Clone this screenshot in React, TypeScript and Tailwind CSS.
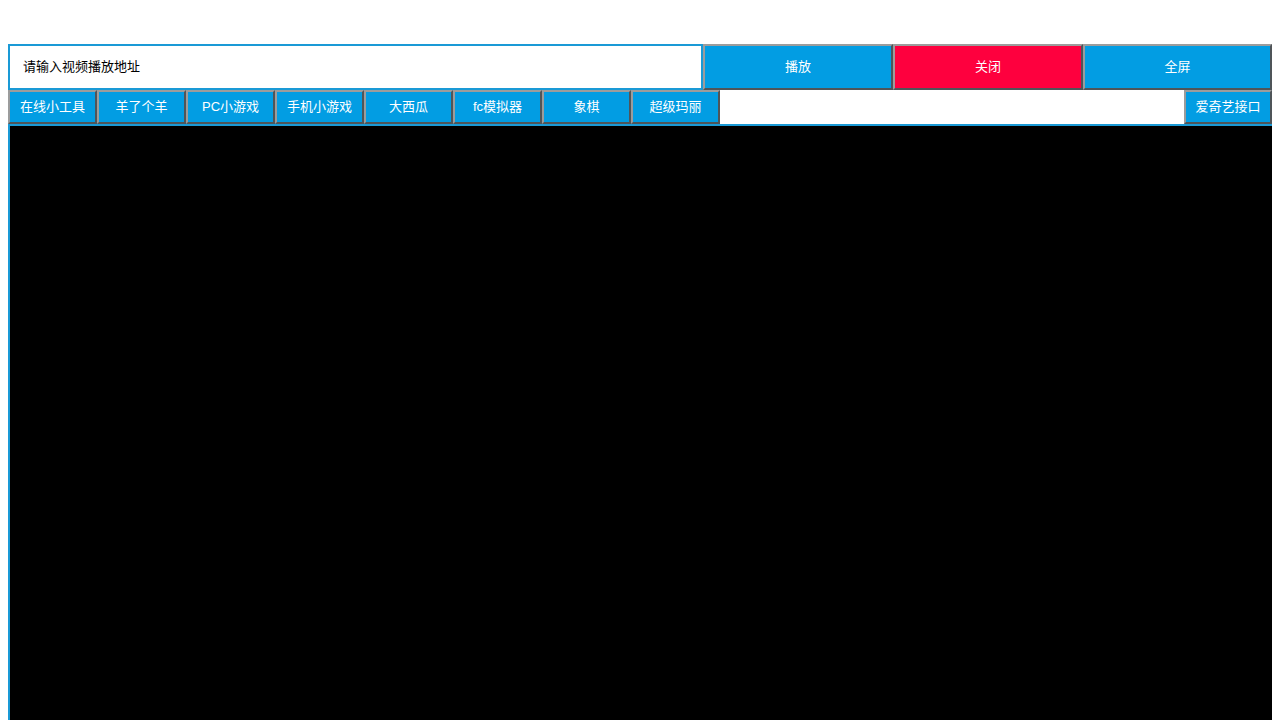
import React, { useState } from 'react'

const font = { fontFamily: '"Liberation Sans", "Noto Sans CJK SC", sans-serif' }

const games = ['在线小工具', '羊了个羊', 'PC小游戏', '手机小游戏', '大西瓜', 'fc模拟器', '象棋', '超级玛丽']

// raised look of a plain html button
const raised =
  'border-2 border-t-[#9c9c9c] border-l-[#9c9c9c] border-b-[#4f5559] border-r-[#4f5559] text-white text-[13px] leading-none pb-[2px]'

export default function App() {
  const [url, setUrl] = useState('')

  return (
    <div className="bg-white min-h-[720px] px-2 pt-[44px]" style={font}>
      <div className="w-[1264px]">
        {/* address + player controls */}
        <div className="flex h-[46px]">
          <input
            value={url}
            onChange={(e) => setUrl(e.target.value)}
            placeholder="请输入视频播放地址"
            className="w-[695px] h-full border-2 border-[#1a9ad6] px-[13px] pb-[2px] text-[13px] text-black placeholder:text-black outline-none"
          />
          <button className={`w-[190px] h-full bg-[#029de3] ${raised}`}>播放</button>
          <button className={`w-[190px] h-full bg-[#fe003e] ${raised}`}>关闭</button>
          <button className={`w-[189px] h-full bg-[#029de3] ${raised}`}>全屏</button>
        </div>

        {/* quick links */}
        <div className="flex h-[34px]">
          {games.map((g) => (
            <button key={g} className={`w-[89px] h-full bg-[#029de3] ${raised}`}>
              {g}
            </button>
          ))}
          <div className="w-[464px] h-full bg-white" />
          <button className={`w-[88px] h-full bg-[#029de3] ${raised}`}>爱奇艺接口</button>
        </div>

        {/* player frame */}
        <div className="h-[600px] bg-black border-l-2 border-t-2 border-[#1a9ad6]" />
      </div>
    </div>
  )
}
